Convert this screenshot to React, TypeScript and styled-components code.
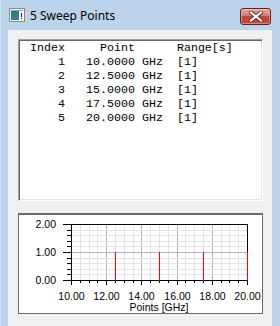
import styled, { createGlobalStyle } from "styled-components";

const GlobalStyle = createGlobalStyle`
  html, body {
    margin: 0;
    padding: 0;
    background: #b9d1ea;
  }
`;

const sweepPoints = [
  { index: 1, ghz: 10 },
  { index: 2, ghz: 12.5 },
  { index: 3, ghz: 15 },
  { index: 4, ghz: 17.5 },
  { index: 5, ghz: 20 },
];

const pad = (s: string, n: number) => s.padStart(n, " ");

const listText = [
  "Index     Point      Range[s]",
  ...sweepPoints.map(
    (p) => `${pad(String(p.index), 5)}   ${p.ghz.toFixed(4).padStart(7, " ")} GHz  [1]`
  ),
].join("\n");

const TitleIcon = () => (
  <svg width="16" height="14" viewBox="0 0 16 14">
    <defs>
      <linearGradient id="ti" x1="0" y1="0" x2="1" y2="1">
        <stop offset="0" stopColor="#2f7d5c" />
        <stop offset="1" stopColor="#3a78c8" />
      </linearGradient>
    </defs>
    <rect x="0.5" y="0.5" width="15" height="13" fill="#f4f4f4" stroke="#8a8a8a" />
    <rect x="2" y="3" width="8" height="9" fill="url(#ti)" />
    <rect x="2" y="2" width="12" height="1" fill="#7b9fcf" />
    <rect x="12" y="5" width="1" height="4" fill="#222" />
    <rect x="12" y="10" width="1" height="1" fill="#222" />
  </svg>
);

const CloseIcon = () => (
  <svg width="14" height="11" viewBox="0 0 14 11">
    <path d="M2 1.5 L12 9.5 M12 1.5 L2 9.5" stroke="#5a2a2a" strokeWidth="4" strokeLinecap="square" />
    <path d="M2 1.5 L12 9.5 M12 1.5 L2 9.5" stroke="#ffffff" strokeWidth="2.2" strokeLinecap="square" />
  </svg>
);

const X0 = 52;
const Y0 = 65;
const px = (v: number) => Math.round(X0 + (v - 10) * 17.6);
const py = (v: number) => Math.round(Y0 - v * 28);

const SweepChart = () => {
  const vMinor: number[] = [];
  const ticksX: number[] = [];
  for (let i = 0; i <= 20; i++) ticksX.push(10 + i * 0.5);
  for (let i = 1; i < 20; i++) vMinor.push(10 + i * 0.5);
  const ticksY: number[] = [];
  for (let i = 0; i <= 10; i++) ticksY.push(i * 0.2);
  return (
    <svg width="243" height="98" viewBox="0 0 243 98">
      <g shapeRendering="crispEdges">
        {vMinor.map((v, i) => (
          <rect
            key={`vg${i}`}
            x={px(v)}
            y={py(2)}
            width={1}
            height={Y0 - py(2)}
            fill={(i + 1) % 4 === 0 ? "#b4b4b4" : "#e3e3e3"}
          />
        ))}
        {ticksY.slice(1, 10).map((v, i) => (
          <rect
            key={`hg${i}`}
            x={X0}
            y={py(v)}
            width={px(20) - X0}
            height={1}
            fill={i === 4 ? "#b4b4b4" : "#e3e3e3"}
          />
        ))}
        <rect
          x={X0 + 0.5}
          y={py(2) + 0.5}
          width={px(20) - X0}
          height={Y0 - py(2)}
          fill="none"
          stroke="#000"
        />
        {ticksY.map((v, i) => (
          <rect
            key={`ty${i}`}
            x={X0 - (i % 5 === 0 ? 8 : 4)}
            y={py(v)}
            width={i % 5 === 0 ? 8 : 4}
            height={1}
            fill="#000"
          />
        ))}
        {ticksX.map((v, i) => (
          <rect
            key={`tx${i}`}
            x={px(v)}
            y={Y0}
            width={1}
            height={i % 4 === 0 ? 5 : 3}
            fill="#000"
          />
        ))}
        {sweepPoints.slice(1).map((p) => (
          <rect
            key={`r${p.index}`}
            x={px(p.ghz)}
            y={py(1)}
            width={1}
            height={Y0 - py(1) + 1}
            fill="#ff0000"
          />
        ))}
      </g>
      <g fontFamily="'Liberation Sans', Arial, sans-serif" fontSize="10.5" fill="#000">
        {[0, 1, 2].map((v) => (
          <text key={`ly${v}`} x={37} y={py(v) + 4} textAnchor="end">
            {v.toFixed(2)}
          </text>
        ))}
        {[10, 12, 14, 16, 18, 20].map((v) => (
          <text key={`lx${v}`} x={px(v) + 0.5} y={85} textAnchor="middle">
            {v.toFixed(2)}
          </text>
        ))}
        <text x={(X0 + px(20)) / 2} y={96} textAnchor="middle">
          Points [GHz]
        </text>
      </g>
    </svg>
  );
};

export default function App() {
  return (
    <>
      <GlobalStyle />
      <Window>
        <TitleBar>
          <TitleIcon />
          <Title>5 Sweep Points</Title>
          <CloseButton>
            <CloseIcon />
          </CloseButton>
        </TitleBar>
        <Client>
          <ListPanel>
            <ListText>{listText}</ListText>
          </ListPanel>
          <ChartPanel>
            <SweepChart />
          </ChartPanel>
        </Client>
      </Window>
    </>
  );
}

const Window = styled.div`
  width: 280px;
  height: 326px;
  display: flex;
  flex-direction: column;
  background: #bcd3ec;
  box-shadow: inset 1px 0 0 #d6e4f3;
  overflow: hidden;
`;

const TitleBar = styled.div`
  height: 30px;
  flex: none;
  display: flex;
  align-items: center;
  padding: 0 9px 0 9px;
  gap: 5px;
  box-sizing: border-box;
`;

const Title = styled.span`
  font-family: "Segoe UI", "Noto Sans", "Open Sans", sans-serif;
  font-size: 12px;
  color: #000;
  margin-top: 1px;
`;

const CloseButton = styled.div`
  margin-left: auto;
  width: 31px;
  height: 17px;
  margin-top: 2px;
  box-sizing: border-box;
  border: 1px solid #5c2323;
  border-radius: 3px;
  display: flex;
  align-items: center;
  justify-content: center;
  background: linear-gradient(#e7a89c 0%, #d5786a 45%, #c24536 50%, #c54a3a 100%);
  box-shadow: inset 0 0 0 1px rgba(255, 210, 200, 0.45);
`;

const Client = styled.div`
  flex: 1;
  margin: 0 8px;
  background: #f0f0f0;
  padding: 9px 9px 0 10px;
  display: flex;
  flex-direction: column;
  gap: 12px;
`;

const ListPanel = styled.div`
  height: 162px;
  flex: none;
  box-sizing: border-box;
  background: #fff;
  border-style: solid;
  border-width: 1px;
  border-color: #a0a0a0 #ffffff #ffffff #a0a0a0;
  box-shadow: inset 1px 1px 0 #696969, inset -1px -1px 0 #e3e3e3;
  padding: 0 0 0 11px;
`;

const ListText = styled.pre`
  margin: 0;
  padding-top: 1px;
  font-family: "Liberation Mono", "Courier New", monospace;
  font-size: 11.67px;
  line-height: 14px;
  color: #000;
  white-space: pre;
`;

const ChartPanel = styled.div`
  height: 101px;
  flex: none;
  box-sizing: border-box;
  background: #fff;
  border: 1px solid #6b6b6b;
  border-top-width: 2px;
  display: flex;
`;
